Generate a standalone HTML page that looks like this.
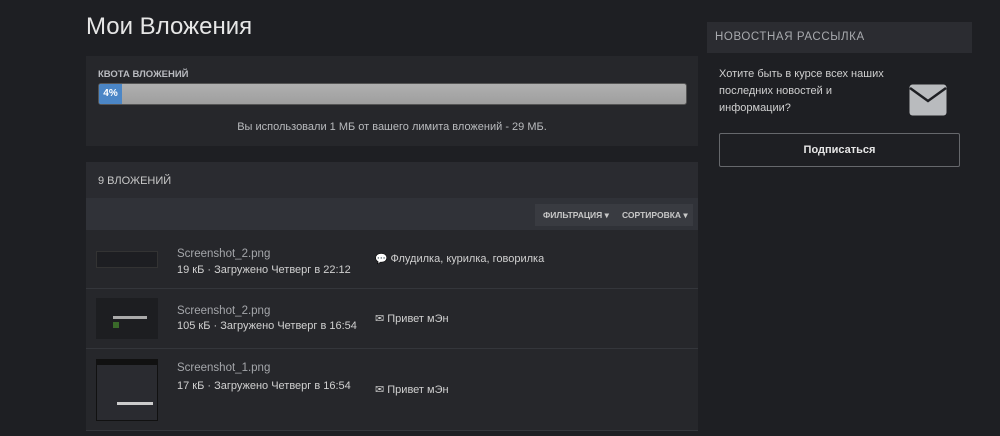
<!DOCTYPE html>
<html><head><meta charset="utf-8"><style>
*{margin:0;padding:0;box-sizing:border-box}
body{width:1000px;height:436px;overflow:hidden;background:#1e1f23;font-family:"Liberation Sans",sans-serif;color:#c8c8c8;position:relative}
.a{position:absolute}
h1{position:absolute;left:86px;top:13px;font-size:24px;font-weight:normal;color:#e6e6e6}
.panel{background:#26272b}
.lbl{font-size:10px;font-weight:bold;color:#b9bbc0}
.row{position:absolute;left:86px;width:612px;border-bottom:1px solid #34363b;background:#26272b}
.fn{position:absolute;left:91px;font-size:11.5px;color:#a4a6aa}
.meta{position:absolute;left:91px;font-size:11px;color:#d0d0d0}
.topic{position:absolute;left:289px;font-size:11px;color:#d0d0d0}
.th{position:absolute;left:10px;width:62px;background:#15161a}
</style></head><body>
<h1>Мои Вложения</h1>
<div class="a panel" style="left:86px;top:56px;width:612px;height:90px"></div>
<div class="a lbl" style="left:98px;top:69px;font-size:9.5px">КВОТА ВЛОЖЕНИЙ</div>
<div class="a" style="left:98px;top:83px;width:589px;height:22px;border-radius:3px;background:linear-gradient(#b0b0b0,#9e9e9e);border:1px solid #555"></div>
<div class="a" style="left:99px;top:84px;width:23px;height:20px;background:#4b86c6;border-radius:2px 0 0 2px;color:#fff;font-size:10px;font-weight:bold;text-align:center;line-height:20px">4%</div>
<div class="a" style="left:86px;top:121px;width:612px;text-align:center;font-size:11px;color:#b9bbbe">Вы использовали 1 МБ от вашего лимита вложений - 29 МБ.</div>
<div class="a panel" style="left:86px;top:162px;width:612px;height:36px;background:#2a2b30"></div>
<div class="a" style="left:98px;top:175px;font-size:11px;color:#c8c8c8">9 ВЛОЖЕНИЙ</div>
<div class="a" style="left:86px;top:198px;width:612px;height:32px;background:#303238"></div>
<div class="a" style="left:535px;top:204px;width:158px;height:22px;background:#393b41"></div>
<div class="a lbl" style="left:543px;top:210px;font-size:8.5px;color:#c8c8c8">ФИЛЬТРАЦИЯ ▾</div>
<div class="a lbl" style="left:622px;top:210px;font-size:8.5px;color:#c8c8c8">СОРТИРОВКА ▾</div>
<div class="row" style="top:230px;height:59px">
<div class="th" style="top:21px;height:17px;background:#1d1e22;border:1px solid #333"></div>
<div class="fn" style="top:18px">Screenshot_2.png</div>
<div class="meta" style="top:34px">19 кБ · Загружено Четверг в 22:12</div>
<div class="topic" style="top:23px"><span style="font-size:10px">💬</span> Флудилка, курилка, говорилка</div>
</div>
<div class="row" style="top:289px;height:60px">
<div class="th" style="top:9px;height:41px;background:#1d1e21"><div class="a" style="left:17px;top:18px;width:34px;height:3px;background:#aaa"></div><div class="a" style="left:17px;top:24px;width:6px;height:6px;background:#3a6a2a"></div></div>
<div class="fn" style="top:16px">Screenshot_2.png</div>
<div class="meta" style="top:31px">105 кБ · Загружено Четверг в 16:54</div>
<div class="topic" style="top:23px">✉ Привет мЭн</div>
</div>
<div class="row" style="top:349px;height:82px">
<div class="th" style="top:10px;height:62px;background:#2a2b30;border:1px solid #111"><div class="a" style="left:0;top:0;width:60px;height:5px;background:#111"></div><div class="a" style="left:20px;top:42px;width:36px;height:3px;background:#ccc"></div></div>
<div class="fn" style="top:13px">Screenshot_1.png</div>
<div class="meta" style="top:31px">17 кБ · Загружено Четверг в 16:54</div>
<div class="topic" style="top:34px">✉ Привет мЭн</div>
</div>
<div class="a" style="left:707px;top:22px;width:265px;height:31px;background:#2b2c31"></div>
<div class="a" style="left:715px;top:31px;font-size:11.5px;letter-spacing:0.6px;color:#a8aaae">НОВОСТНАЯ РАССЫЛКА</div>
<div class="a" style="left:719px;top:66px;font-size:11px;line-height:17px;color:#d0d0d0;width:172px">Хотите быть в курсе всех наших последних новостей и информации?</div>
<svg class="a" style="left:909px;top:84px" width="38" height="32" viewBox="0 0 38 32"><rect x="0.5" y="0.5" width="37" height="31" rx="3" fill="#b9bbbe"/><path d="M1 4 L19 17 L37 4" fill="none" stroke="#1e1f23" stroke-width="2.5"/></svg>
<div class="a" style="left:719px;top:133px;width:241px;height:34px;border:1px solid #66686c;border-radius:2px;text-align:center;line-height:32px;font-size:11px;font-weight:bold;color:#e6e6e6">Подписаться</div>
</body></html>
